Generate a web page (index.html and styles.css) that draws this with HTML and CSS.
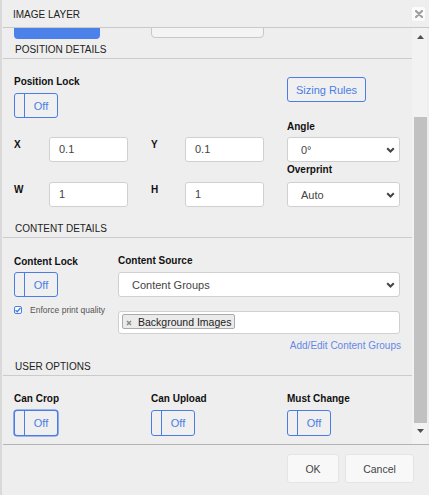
FILE: index.html
```html
<!DOCTYPE html>
<html>
<head>
<meta charset="utf-8">
<title>Image Layer</title>
<link rel="stylesheet" href="styles.css">
</head>
<body>
<div class="dialog">
  <div class="header">
    <span class="title">IMAGE LAYER</span>
    <button class="close" type="button"><svg width="8" height="8" viewBox="0 0 8 8"><path d="M1 1L7 7M7 1L1 7" stroke="#a0a0a0" stroke-width="2.2" stroke-linecap="round"/></svg></button>
  </div>
  <div class="main">
    <div class="scroll">
      <div class="top-row">
        <div class="btn-blue"></div>
        <div class="btn-outline"></div>
      </div>

      <div class="section-title">POSITION DETAILS</div>
      <div class="lock-row">
        <div class="lock-col">
          <div class="label">Position Lock</div>
          <div class="toggle"><span class="knob"></span><span class="state">Off</span></div>
        </div>
        <button class="sizing" type="button">Sizing Rules</button>
      </div>
      <div class="pos-grid">
        <div class="label a-ang">Angle</div>
        <div class="label a-xl grid-lbl">X</div>
        <div class="input a-xi">0.1</div>
        <div class="label a-yl grid-lbl">Y</div>
        <div class="input a-yi">0.1</div>
        <div class="select a-angs"><span>0°</span><svg class="chev" width="9" height="6" viewBox="0 0 9 6"><path d="M1.2 1.2L4.5 4.5L7.8 1.2" fill="none" stroke="#444" stroke-width="2"/></svg></div>
        <div class="label a-ov">Overprint</div>
        <div class="label a-wl grid-lbl">W</div>
        <div class="input a-wi">1</div>
        <div class="label a-hl grid-lbl">H</div>
        <div class="input a-hi">1</div>
        <div class="select a-ovs"><span>Auto</span><svg class="chev" width="9" height="6" viewBox="0 0 9 6"><path d="M1.2 1.2L4.5 4.5L7.8 1.2" fill="none" stroke="#444" stroke-width="2"/></svg></div>
      </div>

      <div class="section-title gap-content">CONTENT DETAILS</div>
      <div class="content-row">
        <div class="content-left">
          <div class="label cl-label">Content Lock</div>
          <div class="toggle cl-toggle"><span class="knob"></span><span class="state">Off</span></div>
          <div class="check-row">
            <span class="checkbox"><svg width="8" height="8" viewBox="0 0 8 8"><path d="M1.5 4.2L3.2 5.8L6.5 2" fill="none" stroke="#4a7de6" stroke-width="1.4"/></svg></span>
            <span class="check-text">Enforce print quality</span>
          </div>
        </div>
        <div class="content-right">
          <div class="label cs-label">Content Source</div>
          <div class="select cs-select"><span>Content Groups</span><svg class="chev" width="9" height="6" viewBox="0 0 9 6"><path d="M1.2 1.2L4.5 4.5L7.8 1.2" fill="none" stroke="#444" stroke-width="2"/></svg></div>
          <div class="tags">
            <span class="chip"><svg class="chip-x" width="6" height="6" viewBox="0 0 6 6"><path d="M1 1L5 5M5 1L1 5" stroke="#8a8a8a" stroke-width="1.5"/></svg><span class="chip-text">Background Images</span></span>
          </div>
          <div class="link">Add/Edit Content Groups</div>
        </div>
      </div>

      <div class="section-title gap-user">USER OPTIONS</div>
      <div class="user-row">
        <div class="user-col col-a">
          <div class="label user-label">Can Crop</div>
          <div class="toggle user-toggle focus"><span class="knob"></span><span class="state">Off</span></div>
        </div>
        <div class="user-col col-b">
          <div class="label user-label">Can Upload</div>
          <div class="toggle user-toggle"><span class="knob"></span><span class="state">Off</span></div>
        </div>
        <div class="user-col col-c">
          <div class="label user-label">Must Change</div>
          <div class="toggle user-toggle"><span class="knob"></span><span class="state">Off</span></div>
        </div>
      </div>
    </div>
    <div class="scrollbar">
      <svg class="sb-up" width="7" height="4" viewBox="0 0 7 4"><polygon points="0,4 7,4 3.5,0" fill="#505050"/></svg>
      <div class="thumb"></div>
      <svg class="sb-down" width="7" height="4" viewBox="0 0 7 4"><polygon points="0,0 7,0 3.5,4" fill="#505050"/></svg>
    </div>
  </div>
  <div class="footer">
    <button class="fbtn ok" type="button">OK</button>
    <button class="fbtn cancel" type="button">Cancel</button>
  </div>
</div>
</body>
</html>
```

FILE: styles.css
```css
* { box-sizing: border-box; }
html, body { margin: 0; padding: 0; }
body {
  width: 429px;
  height: 495px;
  overflow: hidden;
  background: #eeeeee;
  font-family: "Liberation Sans", Arial, sans-serif;
  color: #333;
}
button { font-family: inherit; cursor: pointer; }

.dialog {
  height: 495px;
  display: flex;
  flex-direction: column;
  border-left: 2px solid #d9d9d9;
}

/* header */
.header {
  flex: none;
  height: 28px;
  margin-left: 1px;
  border-bottom: 1px solid #c9c9c9;
  display: flex;
  justify-content: space-between;
  align-items: flex-start;
}
.title {
  font-size: 10px;
  line-height: 12px;
  margin: 9px 0 0 10px;
  color: #222;
}
.close {
  width: 13px;
  height: 14px;
  margin: 7px 4px 0 0;
  padding: 0;
  border: none;
  background: #fbfbfb;
  border-radius: 2px;
  display: flex;
  align-items: center;
  justify-content: center;
}

/* main scrolling area */
.main {
  flex: none;
  height: 416px;
  margin-left: 1px;
  display: flex;
}
.scroll {
  width: 409px;
  flex: none;
  overflow: hidden;
}
.scrollbar {
  width: 15px;
  flex: none;
  background: #f2f2f2;
  display: flex;
  flex-direction: column;
  align-items: center;
}
.sb-up { margin-top: 7px; margin-left: 1px; }
.thumb {
  align-self: flex-end;
  margin-top: 78px;
  width: 13px;
  height: 306px;
  background: #c1c1c1;
}
.sb-down { margin-top: 6px; margin-left: 1px; }

.top-row {
  display: flex;
  align-items: flex-start;
  margin-top: -14px;
  padding-left: 11px;
}
.btn-blue {
  width: 86px;
  height: 25px;
  background: #4b81e8;
  border-radius: 4px;
}
.btn-outline {
  width: 113px;
  height: 24px;
  margin-left: 51px;
  background: #f4f4f4;
  border: 1px solid #c8c8c8;
  border-radius: 4px;
}

.section-title {
  font-size: 10px;
  line-height: 12px;
  padding: 5px 0 2px 12px;
  border-bottom: 1px solid #cbcbcb;
  color: #222;
}
.gap-content { margin-top: 11px; }
.gap-user { margin-top: 4px; }

.label {
  font-size: 10px;
  line-height: 12px;
  font-weight: bold;
  color: #111;
}

/* toggle */
.toggle {
  width: 44px;
  height: 25px;
  border: 1px solid #4a7de6;
  border-radius: 3px;
  display: flex;
  background: #f0f0f0;
}
.toggle.focus { box-shadow: 0 0 0 0.6px #4a7de6; }
.knob {
  width: 10px;
  border-right: 1px solid #4a7de6;
}
.state {
  flex: 1;
  display: flex;
  align-items: center;
  justify-content: center;
  font-size: 11px;
  color: #4a7de6;
}

/* position */
.lock-row {
  display: flex;
  align-items: flex-start;
  padding-left: 11px;
}
.lock-col { width: 273px; }
.lock-col .label { margin-top: 17px; }
.lock-col .toggle { margin-top: 5px; }
.sizing {
  margin-top: 18px;
  width: 79px;
  height: 25px;
  padding: 0;
  background: #f0f0f0;
  border: 1px solid #4a7de6;
  border-radius: 3px;
  font-size: 11px;
  color: #4a7de6;
}

.pos-grid {
  display: grid;
  margin-top: 3px;
  padding-left: 11px;
  grid-template-columns: 35px 79px 23px 34px 79px 23px 113px;
  grid-template-rows: 16px 27px 18px 25px;
  grid-template-areas:
    ". . . . . . ang"
    "xl xi . yl yi . angs"
    ". . . . . . ov"
    "wl wi . hl hi . ovs";
}
.a-ang { grid-area: ang; }
.a-xl { grid-area: xl; }
.a-xi { grid-area: xi; }
.a-yl { grid-area: yl; }
.a-yi { grid-area: yi; }
.a-angs { grid-area: angs; }
.a-ov { grid-area: ov; }
.a-wl { grid-area: wl; }
.a-wi { grid-area: wi; }
.a-hl { grid-area: hl; }
.a-hi { grid-area: hi; }
.a-ovs { grid-area: ovs; }
.grid-lbl { margin-top: 2px; }

.input {
  height: 25px;
  background: #fff;
  border: 1px solid #d0d0d0;
  border-radius: 3px;
  padding-left: 9px;
  font-size: 11px;
  line-height: 23px;
  color: #444;
}
.select {
  height: 25px;
  background: #fff;
  border: 1px solid #d0d0d0;
  border-radius: 3px;
  padding: 0 4px 0 13px;
  display: flex;
  align-items: center;
  justify-content: space-between;
  font-size: 11px;
  color: #444;
}
.chev { flex: none; }

/* content */
.content-row {
  display: flex;
  align-items: flex-start;
  padding-left: 11px;
}
.content-left { width: 104px; }
.content-right { width: 282px; }
.cl-label { margin-top: 18px; }
.cl-toggle { margin-top: 4px; }
.check-row {
  margin-top: 8px;
  height: 10px;
  display: flex;
  align-items: center;
}
.checkbox {
  flex: none;
  width: 8px;
  height: 8px;
  border: 1px solid #4a7de6;
  border-radius: 2px;
  background: #fff;
  display: flex;
  align-items: center;
  justify-content: center;
}
.checkbox svg { flex: none; }
.check-text {
  margin-left: 8px;
  font-size: 8.5px;
  color: #555;
  white-space: nowrap;
}
.cs-label { margin-top: 17px; }
.cs-select { margin-top: 5px; }
.tags {
  margin-top: 14px;
  height: 23px;
  background: #fff;
  border: 1px solid #d0d0d0;
  border-radius: 3px;
  padding: 2px 0 0 3px;
  display: flex;
  align-items: flex-start;
}
.chip {
  height: 15px;
  width: 113px;
  background: #ebebeb;
  border: 1px solid #aaaaaa;
  border-radius: 2px;
  display: flex;
  align-items: center;
  padding-left: 3px;
}
.chip-x { margin-top: 3px; flex: none; }
.chip-text {
  margin-left: 6px;
  font-size: 10.5px;
  color: #222;
  white-space: nowrap;
}
.link {
  margin-top: 6px;
  line-height: 12px;
  font-size: 10px;
  text-align: right;
  color: #6688e6;
  margin-right: -1px;
}

/* user options */
.user-row {
  display: flex;
  align-items: flex-start;
  padding-left: 11px;
}
.col-a { width: 137px; }
.col-b { width: 136px; }
.user-label { margin-top: 17px; }
.user-toggle { margin-top: 5px; height: 26px; }

/* footer */
.footer {
  flex: none;
  height: 51px;
  margin-left: 1px;
  border-top: 1px solid #b4b4b4;
  display: flex;
  justify-content: flex-end;
  align-items: flex-start;
  gap: 6px;
  padding: 9px 15px 0 0;
}
.fbtn {
  height: 29px;
  padding: 0;
  background: #f8f8f8;
  border: 1px solid #e4e4e4;
  border-radius: 3px;
  font-size: 10.5px;
  color: #444;
}
.ok { width: 52px; }
.cancel { width: 69px; }
```
